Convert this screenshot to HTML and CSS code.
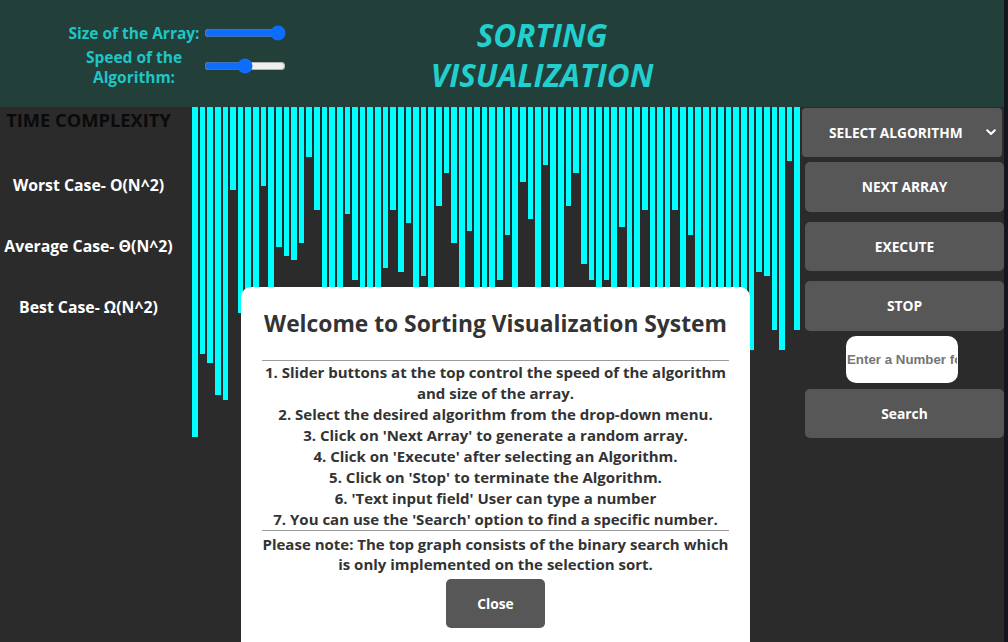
FILE: index.html
```html
<!DOCTYPE html>
<html lang="en">
<head>
<meta charset="utf-8">
<title>Sorting Visualization</title>
<link rel="stylesheet" href="styles.css">
</head>
<body>
<div class="page">
  <header class="top">
    <div class="controls">
      <div class="ctrl">
        <label class="ctrl-label" for="size">Size of the Array:</label>
        <input id="size" class="slider" type="range" min="0" max="100" value="100">
      </div>
      <div class="ctrl">
        <label class="ctrl-label" for="speed">Speed of the Algorithm:</label>
        <input id="speed" class="slider" type="range" min="0" max="100" value="50">
      </div>
    </div>
    <h1 class="title">SORTING<br>VISUALIZATION</h1>
  </header>

  <main class="main">
    <aside class="complexity">
      <h2 class="cx-title">TIME COMPLEXITY</h2>
      <p class="cx-item">Worst Case- O(N^2)</p>
      <p class="cx-item">Average Case- Θ(N^2)</p>
      <p class="cx-item">Best Case- Ω(N^2)</p>
    </aside>

    <section class="bars">
      <div class="bar" style="height:330px"></div>
      <div class="bar" style="height:247px"></div>
      <div class="bar" style="height:256px"></div>
      <div class="bar" style="height:288px"></div>
      <div class="bar" style="height:293px"></div>
      <div class="bar" style="height:83px"></div>
      <div class="bar" style="height:206px"></div>
      <div class="bar" style="height:313px"></div>
      <div class="bar" style="height:243px"></div>
      <div class="bar" style="height:79px"></div>
      <div class="bar" style="height:223px"></div>
      <div class="bar" style="height:140px"></div>
      <div class="bar" style="height:149px"></div>
      <div class="bar" style="height:153px"></div>
      <div class="bar" style="height:136px"></div>
      <div class="bar" style="height:50px"></div>
      <div class="bar" style="height:103px"></div>
      <div class="bar" style="height:273px"></div>
      <div class="bar" style="height:193px"></div>
      <div class="bar" style="height:303px"></div>
      <div class="bar" style="height:107px"></div>
      <div class="bar" style="height:173px"></div>
      <div class="bar" style="height:233px"></div>
      <div class="bar" style="height:288px"></div>
      <div class="bar" style="height:213px"></div>
      <div class="bar" style="height:161px"></div>
      <div class="bar" style="height:103px"></div>
      <div class="bar" style="height:165px"></div>
      <div class="bar" style="height:116px"></div>
      <div class="bar" style="height:253px"></div>
      <div class="bar" style="height:169px"></div>
      <div class="bar" style="height:223px"></div>
      <div class="bar" style="height:99px"></div>
      <div class="bar" style="height:66px"></div>
      <div class="bar" style="height:136px"></div>
      <div class="bar" style="height:283px"></div>
      <div class="bar" style="height:124px"></div>
      <div class="bar" style="height:193px"></div>
      <div class="bar" style="height:313px"></div>
      <div class="bar" style="height:243px"></div>
      <div class="bar" style="height:173px"></div>
      <div class="bar" style="height:128px"></div>
      <div class="bar" style="height:203px"></div>
      <div class="bar" style="height:75px"></div>
      <div class="bar" style="height:112px"></div>
      <div class="bar" style="height:263px"></div>
      <div class="bar" style="height:58px"></div>
      <div class="bar" style="height:233px"></div>
      <div class="bar" style="height:293px"></div>
      <div class="bar" style="height:99px"></div>
      <div class="bar" style="height:66px"></div>
      <div class="bar" style="height:157px"></div>
      <div class="bar" style="height:173px"></div>
      <div class="bar" style="height:223px"></div>
      <div class="bar" style="height:173px"></div>
      <div class="bar" style="height:253px"></div>
      <div class="bar" style="height:120px"></div>
      <div class="bar" style="height:193px"></div>
      <div class="bar" style="height:273px"></div>
      <div class="bar" style="height:103px"></div>
      <div class="bar" style="height:213px"></div>
      <div class="bar" style="height:303px"></div>
      <div class="bar" style="height:243px"></div>
      <div class="bar" style="height:103px"></div>
      <div class="bar" style="height:193px"></div>
      <div class="bar" style="height:128px"></div>
      <div class="bar" style="height:283px"></div>
      <div class="bar" style="height:223px"></div>
      <div class="bar" style="height:263px"></div>
      <div class="bar" style="height:203px"></div>
      <div class="bar" style="height:233px"></div>
      <div class="bar" style="height:293px"></div>
      <div class="bar" style="height:213px"></div>
      <div class="bar" style="height:243px"></div>
      <div class="bar" style="height:165px"></div>
      <div class="bar" style="height:169px"></div>
      <div class="bar" style="height:223px"></div>
      <div class="bar" style="height:243px"></div>
      <div class="bar" style="height:54px"></div>
      <div class="bar" style="height:223px"></div>
    </section>

    <aside class="actions">
      <div class="select-wrap">
        <select class="algo-select">
          <option>SELECT ALGORITHM</option>
        </select>
        <svg class="chevron" width="10" height="7" viewBox="0 0 10 7" aria-hidden="true"><path d="M1.2 1.2 L5 5 L8.8 1.2" fill="none" stroke="#fff" stroke-width="2" stroke-linecap="round" stroke-linejoin="round"/></svg>
      </div>
      <button class="btn">NEXT ARRAY</button>
      <button class="btn">EXECUTE</button>
      <button class="btn">STOP</button>
      <input class="num-input" type="text" placeholder="Enter a Number for Search">
      <button class="btn btn-search">Search</button>
    </aside>

    <div class="edge"></div>
  </main>

  <div class="modal">
    <h2 class="modal-title">Welcome to Sorting Visualization System</h2>
    <hr class="rule">
    <p class="modal-text steps">1. Slider buttons at the top control the speed of the algorithm and size of the array.<br>
    2. Select the desired algorithm from the drop-down menu.<br>
    3. Click on 'Next Array' to generate a random array.<br>
    4. Click on 'Execute' after selecting an Algorithm.<br>
    5. Click on 'Stop' to terminate the Algorithm.<br>
    6. 'Text input field' User can type a number<br>
    7. You can use the 'Search' option to find a specific number.</p>
    <hr class="rule">
    <p class="modal-text note">Please note: The top graph consists of the binary search which is only implemented on the selection sort.</p>
    <button class="close-btn">Close</button>
  </div>
</div>
</body>
</html>
```

FILE: styles.css
```css
* { box-sizing: border-box; }

html, body {
  margin: 0;
  padding: 0;
  width: 1008px;
  height: 642px;
  overflow: hidden;
  background: #2b2b2b;
  font-family: "Open Sans", "Noto Sans", sans-serif;
}

.page {
  position: relative;
  width: 1008px;
  height: 642px;
  display: flex;
  flex-direction: column;
}

/* Header */
.top {
  height: 107px;
  background: #223f39;
  display: flex;
  flex: none;
}

.controls {
  width: 290px;
  padding-top: 23px;
  display: flex;
  flex-direction: column;
  gap: 4px;
}

.ctrl {
  display: flex;
  align-items: center;
}

.ctrl-label {
  width: 136px;
  margin-left: 66px;
  text-align: center;
  color: #1ec6c6;
  font-weight: 700;
  font-size: 15.5px;
  line-height: 20px;
}

.slider {
  width: 82px;
  height: 16px;
  margin: 0 0 0 2px;
  accent-color: #0d6efd;
}

.ctrl + .ctrl .slider { margin-top: -2px; }

.title {
  width: 504px;
  margin: 15px 0 0;
  text-align: center;
  color: #22cfcf;
  font-style: italic;
  font-weight: 700;
  font-size: 31.4px;
  line-height: 40px;
}

/* Main area */
.main {
  flex: 1;
  display: grid;
  grid-template-columns: 192px 608px 204px 4px;
  min-height: 0;
}

.complexity {
  width: 177px;
  text-align: center;
}

.cx-title {
  margin: 2px 0 0;
  color: #0a0a0a;
  font-size: 18.3px;
  font-weight: 700;
  line-height: 22px;
}

.cx-item {
  margin: 0;
  color: #fff;
  font-size: 15.8px;
  font-weight: 700;
  line-height: 20px;
}

.cx-title + .cx-item { margin-top: 44px; }
.cx-item + .cx-item { margin-top: 41px; }

.bars {
  display: flex;
  align-items: flex-start;
  gap: 2px;
}

.bar {
  flex: 1;
  background: #00ffff;
}

.actions {
  display: flex;
  flex-direction: column;
  align-items: flex-end;
  padding-top: 1px;
}

.select-wrap {
  position: relative;
  width: 200px;
  height: 49px;
  align-self: flex-start;
  margin-left: 2px;
}

.algo-select {
  appearance: none;
  -webkit-appearance: none;
  width: 100%;
  height: 100%;
  border: none;
  border-radius: 4px;
  background: #575757;
  color: #fff;
  font-family: inherit;
  font-weight: 700;
  font-size: 13.7px;
  padding: 0 0 0 27px;
  outline: none;
}

.chevron {
  position: absolute;
  right: 6px;
  top: 21px;
}

.btn {
  width: 199px;
  height: 49.5px;
  border: none;
  border-radius: 5px;
  background: #575757;
  color: #fff;
  font-family: inherit;
  font-weight: 700;
  font-size: 13.8px;
  margin-top: 5px;
  padding: 0;
}

.btn + .btn { margin-top: 10px; }

.num-input {
  width: 112px;
  height: 47px;
  margin: 5px 46px 0 0;
  border: none;
  border-radius: 10px;
  background: #fff;
  padding: 0 1px;
  font-family: "Liberation Sans", Arial, sans-serif;
  font-size: 13.3px;
  outline: none;
}

.num-input::placeholder {
  color: #757575;
  font-weight: 700;
}

.btn-search { margin-top: 6px; }

.edge {
  background: #15151d;
  margin-top: -107px;
}

/* Modal */
.modal {
  position: absolute;
  left: 241px;
  top: 287px;
  width: 509px;
  height: 400px;
  background: #fff;
  border-radius: 10px;
  padding: 22px 21px 0;
  text-align: center;
  color: #333;
}

.modal-title {
  margin: 0 0 21px;
  font-size: 22.8px;
  font-weight: 700;
  line-height: 30px;
}

.rule {
  margin: 0;
  border: none;
  border-top: 1px solid #9b9b9b;
}

.modal-text {
  margin: 0;
  font-size: 15px;
  font-weight: 700;
  line-height: 21px;
}

.steps { padding-top: 1px; }

.note { line-height: 20px; padding-top: 3px; }

.close-btn {
  margin-top: 5px;
  width: 99px;
  height: 49px;
  border: none;
  border-radius: 5px;
  background: #575757;
  color: #fff;
  font-family: inherit;
  font-weight: 700;
  font-size: 13.8px;
}
```
